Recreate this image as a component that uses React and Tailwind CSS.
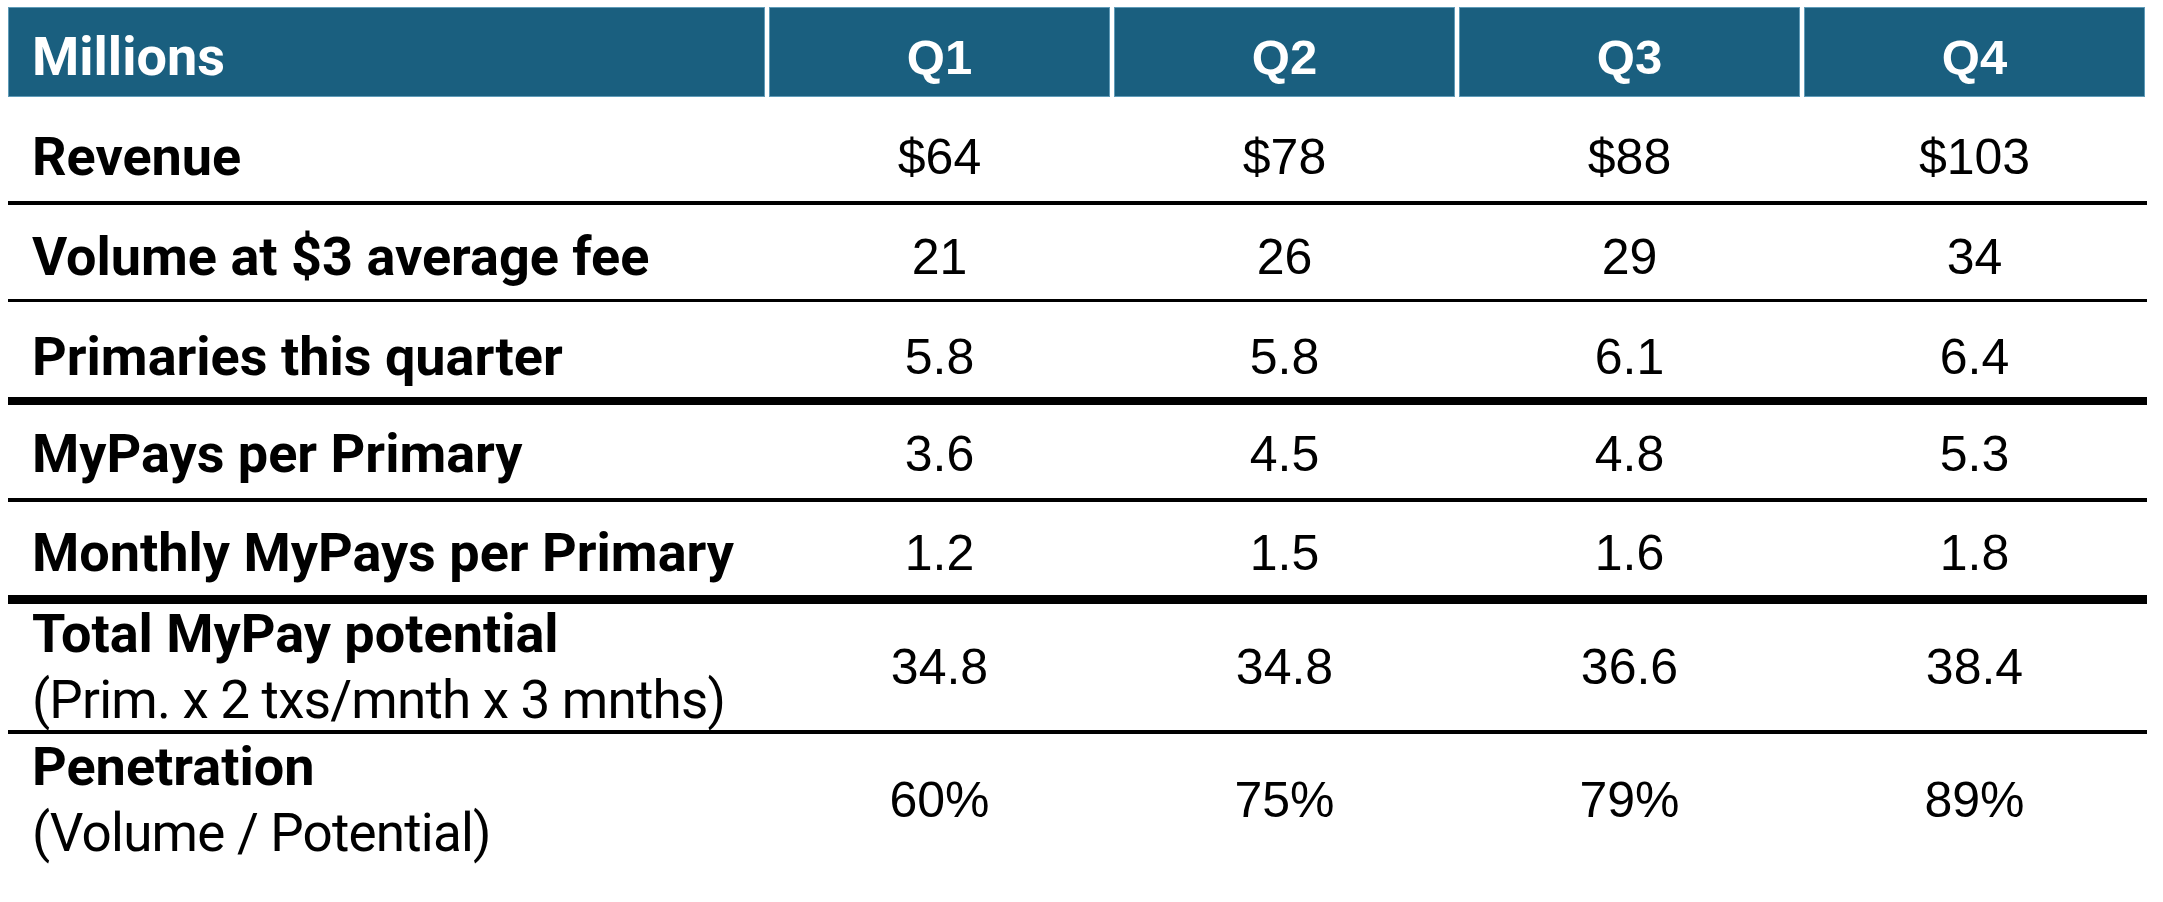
import React from "react";

const LABEL = { fontFamily: "Roboto, Inter, 'Liberation Sans', sans-serif" };
const NUM = { fontFamily: "'Liberation Sans', Arial, sans-serif" };

const rows = [
  { label: "Revenue", vals: ["$64", "$78", "$88", "$103"], h: "h-[108px] pt-[16px]", border: "border-b-[4px]" },
  { label: "Volume at $3 average fee", vals: ["21", "26", "29", "34"], h: "h-[97px] pt-[10px]", border: "border-b-[3px]" },
  { label: "Primaries this quarter", vals: ["5.8", "5.8", "6.1", "6.4"], h: "h-[103px] pt-[14px]", border: "border-b-[8px]" },
  { label: "MyPays per Primary", vals: ["3.6", "4.5", "4.8", "5.3"], h: "h-[97px] pt-[4px]", border: "border-b-[4px]" },
  { label: "Monthly MyPays per Primary", vals: ["1.2", "1.5", "1.6", "1.8"], h: "h-[102px] pt-[9px]", border: "border-b-[9px]" },
  { label: "Total MyPay potential", sub: "(Prim. x 2 txs/mnth x 3 mnths)", vals: ["34.8", "34.8", "36.6", "38.4"], h: "h-[130px]", border: "border-b-[4px]" },
  { label: "Penetration", sub: "(Volume / Potential)", vals: ["60%", "75%", "79%", "89%"], h: "h-[132px]", border: "" },
];

export default function App() {
  return (
    <div className="w-[2163px] h-[902px] bg-white overflow-hidden">
      <div className="ml-[8px] mt-[7px] w-[2139px] flex flex-col">
        {/* header */}
        <div className="flex gap-[4px] h-[90px]">
          <div className="w-[757px] h-full bg-[#1a5f7f] border border-[#5f9bb8] flex items-center pl-[23px] pt-[10px]">
            <span className="text-white font-bold text-[54px] leading-none" style={LABEL}>Millions</span>
          </div>
          {["Q1", "Q2", "Q3", "Q4"].map((q) => (
            <div key={q} className="w-[341px] h-full bg-[#1a5f7f] border border-[#5f9bb8] flex items-center justify-center pt-[10px]">
              <span className="text-white font-bold text-[49px] leading-none" style={NUM}>{q}</span>
            </div>
          ))}
        </div>
        {rows.map((r) => (
          <div key={r.label} className={`flex gap-[4px] border-black ${r.h} ${r.border}`}>
            <div className="w-[757px] flex flex-col justify-center pl-[24px] text-black">
              <div className={`font-bold text-[54px] ${r.sub ? "leading-[67px]" : "leading-none"}`} style={LABEL}>{r.label}</div>
              {r.sub && (
                <div className="font-normal text-[53px] leading-[67px] tracking-[-0.8px]" style={LABEL}>{r.sub}</div>
              )}
            </div>
            {r.vals.map((v, i) => (
              <div key={i} className="w-[341px] flex items-center justify-center">
                <span className="text-black text-[50px] leading-none" style={NUM}>{v}</span>
              </div>
            ))}
          </div>
        ))}
      </div>
    </div>
  );
}
